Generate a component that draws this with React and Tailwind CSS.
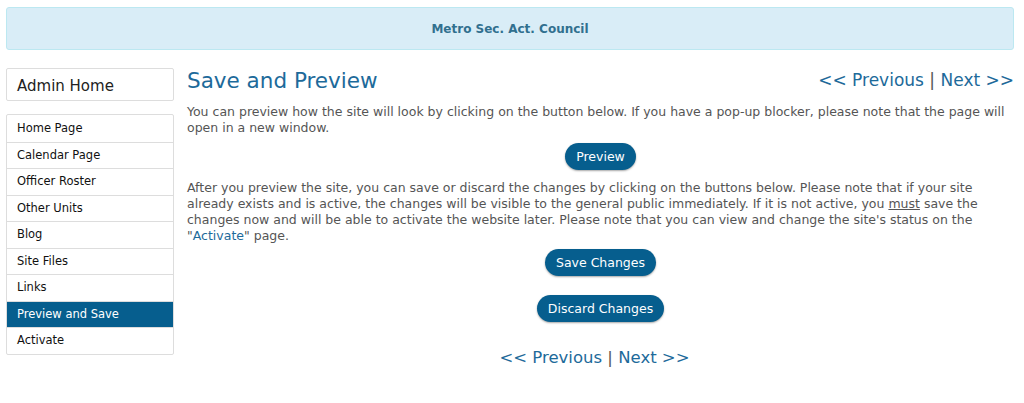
import React from 'react';

const menu = [
    'Home Page',
    'Calendar Page',
    'Officer Roster',
    'Other Units',
    'Blog',
    'Site Files',
    'Links',
    'Preview and Save',
    'Activate',
];

const PrevNext = ({ className }) => (
    <div className={`text-[#1d6a9a] ${className}`}>
        <a href="#">&lt;&lt; Previous</a> <span className="text-[#555]">|</span> <a href="#">Next &gt;&gt;</a>
    </div>
);

const Button = ({ children }) => (
    <button className="bg-[#065e8e] text-white text-[12.5px] rounded-full px-[11px] h-[27px] shadow-[0_1px_2px_rgba(0,0,0,0.35)]">
        {children}
    </button>
);

const App = () => {
    return (
        <div className="w-[1024px] h-[403px] bg-white px-[6px] pt-[7px] font-['DejaVu_Sans',Verdana,sans-serif] overflow-hidden">
            <div className="w-[1008px] h-[43px] bg-[#d9edf7] border border-[#bce8f1] rounded-[3px] flex items-center justify-center">
                <span className="text-[#31708f] text-[12px] font-bold">Metro Sec. Act. Council</span>
            </div>

            <div className="flex mt-[18px]">
                <div className="w-[168px] shrink-0">
                    <div className="h-[33px] border border-[#ddd] rounded-[2px] flex items-center px-[10px] pt-[3px] text-[15px] text-[#222]">
                        Admin Home
                    </div>
                    <div className="mt-[13px] border border-[#ddd] rounded-[2px]">
                        {menu.map((item, i) => (
                            <div
                                key={item}
                                className={`h-[26.5px] flex items-center px-[10px] text-[11.5px] ${i > 0 ? 'border-t border-[#ddd]' : ''} ${item === 'Preview and Save' ? 'bg-[#065e8e] text-white' : 'text-[#111]'}`}
                            >
                                {item}
                            </div>
                        ))}
                    </div>
                </div>

                <div className="flex-1 ml-[13px] mr-[4px] text-[12.5px] leading-[16px] text-[#555]">
                    <div className="flex justify-between items-center h-[26px]">
                        <h1 className="text-[21.5px] text-[#1d6a9a]">Save and Preview</h1>
                        <PrevNext className="text-[17px] mb-[3px]" />
                    </div>
                    <p className="mt-[10px]">
                        You can preview how the site will look by clicking on the button below. If you have a pop-up blocker, please note that the page will open in a new window.
                    </p>
                    <div className="flex justify-center mt-[7px]">
                        <Button>Preview</Button>
                    </div>
                    <p className="mt-[10px]">
                        After you preview the site, you can save or discard the changes by clicking on the buttons below. Please note that if your site already exists and is active, the changes will be visible to the general public immediately. If it is not active, you <u>must</u> save the changes now and will be able to activate the website later. Please note that you can view and change the site's status on the "<a href="#" className="text-[#1d6a9a]">Activate</a>" page.
                    </p>
                    <div className="flex justify-center mt-[5px]">
                        <Button>Save Changes</Button>
                    </div>
                    <div className="flex justify-center mt-[19px]">
                        <Button>Discard Changes</Button>
                    </div>
                    <div className="flex justify-center mt-[28px] pr-[12px]">
                        <PrevNext className="text-[16.5px]" />
                    </div>
                </div>
            </div>
        </div>
    );
};

export default App;
